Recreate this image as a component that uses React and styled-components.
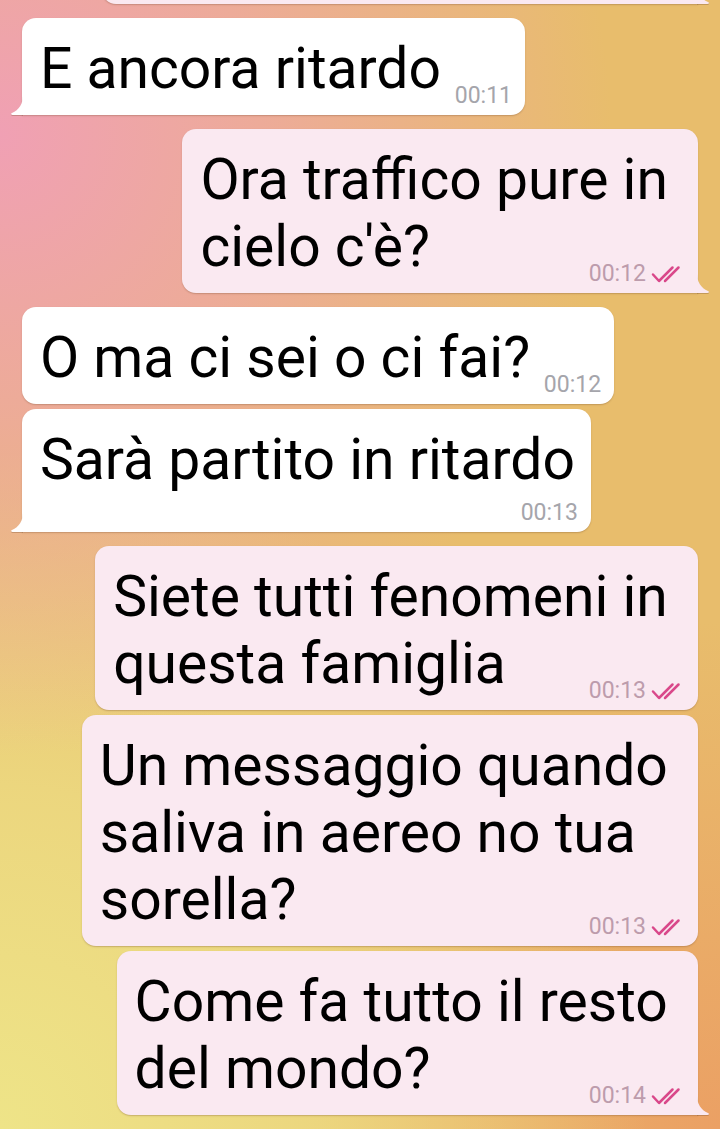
import React from "react";
import styled, { createGlobalStyle, css } from "styled-components";

const GlobalStyle = createGlobalStyle`
  html, body {
    margin: 0;
    padding: 0;
    height: 100%;
  }
  body {
    font-family: Roboto, "Noto Sans", "Liberation Sans", sans-serif;
    -webkit-font-smoothing: antialiased;
  }
  #root { height: 100%; }
`;

const Screen = styled.div`
  height: 100vh;
  overflow: hidden;
  display: flex;
  flex-direction: column;
  justify-content: flex-end;
  padding: 0 22px 14px;
  box-sizing: border-box;
  background:
    radial-gradient(ellipse 85% 55% at 0% 12%, rgba(240, 160, 180, 1) 0%, rgba(240, 160, 180, 0.6) 45%, rgba(240, 160, 180, 0) 100%),
    radial-gradient(ellipse 90% 60% at 0% 100%, rgba(238, 228, 136, 1) 0%, rgba(238, 228, 136, 0.65) 50%, rgba(238, 228, 136, 0) 100%),
    radial-gradient(ellipse 60% 45% at 100% 100%, rgba(235, 160, 100, 1) 0%, rgba(235, 160, 100, 0) 100%),
    #e8bd6c;
`;

const Row = styled.div`
  display: flex;
  flex-shrink: 0;
  justify-content: ${(p) => (p.$out ? "flex-end" : "flex-start")};
  margin-top: ${(p) => (p.$first ? "14px" : "5px")};
`;

const Bubble = styled.div`
  position: relative;
  box-sizing: border-box;
  padding: 17px 16px 13px 18px;
  border-radius: 14px;
  background: ${(p) => (p.$out ? "#fae9f1" : "#ffffff")};
  box-shadow: 0 1px 1.5px rgba(110, 70, 40, 0.3);
  ${(p) =>
    p.$tail &&
    css`
      ${p.$out ? "border-bottom-right-radius: 0;" : "border-bottom-left-radius: 0;"}
    `}
`;

const Text = styled.div`
  font-size: 57px;
  line-height: normal;
  color: #000;
`;

const Line = styled.span`
  display: block;
  white-space: pre;
`;

const Spacer = styled.span`
  display: inline-block;
  width: ${(p) => (p.$out ? "114px" : "68px")};
  height: 1px;
`;

const Meta = styled.div`
  display: flex;
  align-items: center;
  gap: 5px;
  font-size: 23px;
  line-height: 24px;
  color: ${(p) => (p.$out ? "#bd9cac" : "#a5a5ab")};
  ${(p) =>
    p.$overlay &&
    css`
      position: absolute;
      right: 13px;
      bottom: 7px;
    `}
`;

const MetaRow = styled.div`
  display: flex;
  justify-content: flex-end;
  margin: 8px -3px -6px 0;
`;

const TailSvg = styled.svg`
  position: absolute;
  bottom: 0;
  width: 13px;
  height: 20px;
  ${(p) => (p.$out ? "right: -12px;" : "left: -12px;")}
  filter: drop-shadow(0 1px 0.75px rgba(110, 70, 40, 0.3));
`;

const Tail = ({ out }) => (
  <TailSvg $out={out} viewBox="0 0 13 20">
    <path
      fill={out ? "#fae9f1" : "#ffffff"}
      d={
        out
          ? "M0 0 C0 9 4 15 11 18 C12.5 18.7 12.2 20 10.5 20 L0 20 Z"
          : "M13 0 C13 9 9 15 2 18 C0.5 18.7 0.8 20 2.5 20 L13 20 Z"
      }
    />
  </TailSvg>
);

const Checks = () => (
  <svg width="34" height="18" viewBox="0 0 34 18" fill="none">
    <path
      d="M2 9.5 L8 16 L21.5 2.5"
      stroke="#d9488a"
      strokeWidth="2.5"
      strokeLinecap="round"
      strokeLinejoin="round"
    />
    <path
      d="M14 16 L27.5 2.5"
      stroke="#d9488a"
      strokeWidth="2.5"
      strokeLinecap="round"
    />
  </svg>
);

const messages = [
  { out: true, lines: ["Il volo doveva arrivare ", "alle 23:30"], time: "00:10", tail: true, first: true },
  { out: false, lines: ["E ancora ritardo"], time: "00:11", tail: true, first: true },
  { out: true, lines: ["Ora traffico pure in ", "cielo c'è?"], time: "00:12", tail: true, first: true },
  { out: false, lines: ["O ma ci sei o ci fai?"], time: "00:12", first: true },
  { out: false, lines: ["Sarà partito in ritardo"], time: "00:13", tail: true, metaBelow: true },
  { out: true, lines: ["Siete tutti fenomeni in ", "questa famiglia"], time: "00:13", first: true },
  { out: true, lines: ["Un messaggio quando ", "saliva in aereo no tua ", "sorella?"], time: "00:13" },
  { out: true, lines: ["Come fa tutto il resto ", "del mondo?"], time: "00:14", tail: true },
];

const Message = ({ out, lines, time, tail, first, metaBelow }) => {
  const meta = (
    <Meta $out={out} $overlay={!metaBelow}>
      <span>{time}</span>
      {out && <Checks />}
    </Meta>
  );
  return (
    <Row $out={out} $first={first}>
      <Bubble $out={out} $tail={tail}>
        <Text>
          {lines.map((l, i) => (
            <Line key={i}>
              {l}
              {!metaBelow && i === lines.length - 1 && <Spacer $out={out} />}
            </Line>
          ))}
        </Text>
        {metaBelow ? <MetaRow>{meta}</MetaRow> : meta}
        {tail && <Tail out={out} />}
      </Bubble>
    </Row>
  );
};

export default function App() {
  return (
    <>
      <GlobalStyle />
      <Screen>
        {messages.map((m, i) => (
          <Message key={i} {...m} />
        ))}
      </Screen>
    </>
  );
}
